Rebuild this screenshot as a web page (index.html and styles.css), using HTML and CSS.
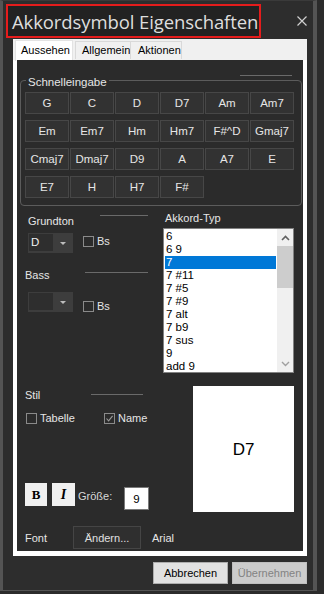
FILE: index.html
```html
<!DOCTYPE html>
<html>
<head>
<meta charset="utf-8">
<link rel="stylesheet" href="styles.css">
</head>
<body>
<div class="window">
  <div class="titlebar">
    <div class="title-box"><span class="title">Akkordsymbol Eigenschaften</span></div>
    <svg class="close" width="10" height="10" viewBox="0 0 10 10"><path d="M0.5 0.5 L9.5 9.5 M9.5 0.5 L0.5 9.5" stroke="#d0d0d0" stroke-width="1.2"/></svg>
  </div>
  <div class="tabctl">
    <div class="tabstrip">
      <div class="tab active">Aussehen</div>
      <div class="tab">Allgemein</div>
      <div class="tab">Aktionen</div>
    </div>
    <div class="panel">
      <div class="deco-line"></div>
      <div class="group">
        <div class="group-label">Schnelleingabe</div>
        <div class="chord-grid">
          <div class="cbtn">G</div><div class="cbtn">C</div><div class="cbtn">D</div><div class="cbtn">D7</div><div class="cbtn">Am</div><div class="cbtn">Am7</div>
          <div class="cbtn">Em</div><div class="cbtn">Em7</div><div class="cbtn">Hm</div><div class="cbtn">Hm7</div><div class="cbtn">F#^D</div><div class="cbtn">Gmaj7</div>
          <div class="cbtn">Cmaj7</div><div class="cbtn">Dmaj7</div><div class="cbtn">D9</div><div class="cbtn">A</div><div class="cbtn">A7</div><div class="cbtn">E</div>
          <div class="cbtn">E7</div><div class="cbtn">H</div><div class="cbtn">H7</div><div class="cbtn">F#</div>
        </div>
      </div>
      <div class="lower">
        <div class="left-col">
          <div class="hdr hdr-grund"><span class="lbl lbl-indent">Grundton</span><span class="hline w48"></span></div>
          <div class="combo-row">
            <div class="combo"><div class="combo-field">D</div><div class="combo-arrow"></div></div>
            <div class="chk-wrap chk-a"><span class="chk"></span><span class="lbl">Bs</span></div>
          </div>
          <div class="hdr hdr-bass"><span class="lbl">Bass</span><span class="hline w63 mt4"></span></div>
          <div class="combo-row row2">
            <div class="combo"><div class="combo-field"></div><div class="combo-arrow"></div></div>
            <div class="chk-wrap chk-b"><span class="chk"></span><span class="lbl">Bs</span></div>
          </div>
          <div class="hdr hdr-stil"><span class="lbl">Stil</span><span class="hline w52 mt6"></span></div>
          <div class="check-row">
            <div class="chk-wrap first"><span class="chk"></span><span class="lbl">Tabelle</span></div>
            <div class="chk-wrap"><span class="chk checked"><svg width="9" height="9" viewBox="0 0 9 9"><path d="M1.5 4.5 L3.6 6.8 L7.6 1.8" fill="none" stroke="#9a9a9a" stroke-width="1.1"/></svg></span><span class="lbl">Name</span></div>
          </div>
          <div class="style-row">
            <div class="sbtn bold">B</div>
            <div class="sbtn italic">I</div>
            <span class="lbl size-lbl">Größe:</span>
            <div class="size-input">9</div>
          </div>
        </div>
        <div class="right-col">
          <div class="lbl type-lbl">Akkord-Typ</div>
          <div class="listbox">
            <div class="items">
              <div class="item">6</div>
              <div class="item">6 9</div>
              <div class="item sel">7</div>
              <div class="item">7 #11</div>
              <div class="item">7 #5</div>
              <div class="item">7 #9</div>
              <div class="item">7 alt</div>
              <div class="item">7 b9</div>
              <div class="item">7 sus</div>
              <div class="item">9</div>
              <div class="item">add 9</div>
            </div>
            <div class="scrollbar">
              <div class="sarrow"><svg width="9" height="6" viewBox="0 0 9 6"><path d="M1 5 L4.5 1.5 L8 5" fill="none" stroke="#606060" stroke-width="1.6"/></svg></div>
              <div class="thumb"></div>
              <div class="strack"></div>
              <div class="sarrow"><svg width="9" height="6" viewBox="0 0 9 6"><path d="M1 1 L4.5 4.5 L8 1" fill="none" stroke="#a0a0a0" stroke-width="1.4"/></svg></div>
            </div>
          </div>
          <div class="preview">D7</div>
        </div>
      </div>
      <div class="font-row">
        <span class="lbl font-lbl">Font</span>
        <div class="dbtn">Ändern...</div>
        <span class="lbl arial">Arial</span>
      </div>
    </div>
  </div>
  <div class="footer">
    <div class="fbtn">Abbrechen</div>
    <div class="fbtn disabled">Übernehmen</div>
  </div>
</div>
</body>
</html>
```

FILE: styles.css
```css
* { box-sizing: border-box; }
html, body { margin: 0; padding: 0; }
body {
  width: 324px;
  height: 594px;
  background: #2b2b2b;
  font-family: "Liberation Sans", Arial, sans-serif;
  font-size: 11px;
  color: #e6e6e6;
  overflow: hidden;
}
.window {
  width: 317px;
  height: 591px;
  background: #2d2d2d;
  border-left: 3px solid #545454;
  border-right: 4px solid #545454;
  border-bottom: 1px solid #545454;
  border-top: 1px solid #3a3a3a;
}
.titlebar {
  height: 38px;
  display: flex;
  justify-content: space-between;
  align-items: flex-start;
}
.title-box {
  margin: 3px 0 0 3px;
  width: 255px;
  height: 34px;
  border: 2px solid #e51c1c;
  background: #222222;
  padding-left: 4px;
  display: flex;
  align-items: center;
}
.title {
  font-family: "Open Sans", "Noto Sans", sans-serif;
  font-size: 18.5px;
  color: #dedede;
  white-space: nowrap;
  letter-spacing: -0.1px;
}
.close { margin: 15px 6px 0 0; }
.tabctl {
  margin-left: 10px;
  width: 294px;
  height: 517px;
  background: #ffffff;
  padding: 0 4px 5px 4px;
  display: flex;
  flex-direction: column;
}
.tabstrip {
  height: 21px;
  display: flex;
  align-items: flex-start;
  background: #f0f0f0;
  margin: 0 -4px;
  padding-left: 2px;
  border-bottom: 0;
}
.tab {
  height: 18px;
  margin-top: 2px;
  padding: 0 6px;
  line-height: 16px;
  color: #000;
  background: #f0f0f0;
  border: 1px solid #d9d9d9;
  border-bottom: 0;
}
.tab.active {
  background: #ffffff;
  height: 21px;
  margin-top: 1px;
  width: 58px;
  padding-left: 5px;
  line-height: 18px;
  border-color: #e3e3e3;
}
.tab:nth-child(2) { width: 56px; margin-left: 2px; }
.tab:nth-child(3) { width: 52px; margin-left: -1px; padding-left: 7px; }
.panel {
  flex: 1;
  background: #2b2b2b;
}
.deco-line {
  margin: 15px 0 0 223px;
  width: 52px;
  height: 1px;
  background: #6a6a6a;
}
.group {
  margin: 4px 0 0 3px;
  width: 282px;
  height: 126px;
  border: 1px solid #5c5c5c;
  border-radius: 4px;
  padding-left: 4px;
}
.group-label {
  display: table;
  margin: -6px 0 0 1px;
  padding: 0 2px;
  line-height: 14px;
  background: #2b2b2b;
  font-size: 11.5px;
}
.chord-grid {
  margin-top: 3px;
  display: grid;
  grid-template-columns: repeat(6, 44px);
  grid-auto-rows: 22px;
  column-gap: 1px;
  row-gap: 6px;
}
.cbtn {
  background: #323232;
  border: 1px solid #474747;
  display: flex;
  align-items: center;
  justify-content: center;
  font-size: 11.5px;
  color: #e6e6e6;
}
.lower {
  display: flex;
  align-items: flex-start;
  margin: 5px 0 0 8px;
}
.left-col { width: 138px; margin-top: 3px; }
.right-col { width: 131px; }
.lbl { line-height: 14px; white-space: nowrap; color: #e6e6e6; }
.lbl-indent { padding-left: 3px; }
.hdr {
  display: flex;
  justify-content: space-between;
  align-items: flex-start;
  height: 14px;
  width: 123px;
}
.hdr-bass { margin-top: 15px; }
.hdr-stil { margin-top: 76px; width: 118px; }
.hline { height: 1px; background: #6a6a6a; margin-top: 1px; }
.w48 { width: 48px; }
.w63 { width: 63px; }
.w52 { width: 52px; }
.mt4 { margin-top: 4px; }
.mt6 { margin-top: 6px; }
.combo-row {
  display: flex;
  align-items: flex-start;
  margin-top: 5px;
  height: 20px;
}
.combo-row.row2 { margin-top: 10px; }
.combo {
  margin-left: 3px;
  width: 45px;
  height: 20px;
  background: #3d3d3d;
  padding: 1px;
  display: flex;
}
.combo-field {
  width: 24px;
  height: 17px;
  background: #2e2e2e;
  color: #f0f0f0;
  padding-left: 2px;
  line-height: 17px;
  font-size: 11.5px;
}
.combo-arrow {
  flex: 1;
  display: flex;
  align-items: center;
  justify-content: center;
}
.combo-arrow::after {
  content: "";
  border-left: 3px solid transparent;
  border-right: 3px solid transparent;
  border-top: 3px solid #bdbdbd;
}
.chk-wrap { display: flex; align-items: center; height: 14px; }
.chk-a { margin: 1px 0 0 10px; }
.chk-b { margin: 7px 0 0 10px; }
.chk {
  width: 11px;
  height: 11px;
  border: 1px solid #8a8a8a;
  margin-right: 3px;
  display: flex;
  align-items: center;
  justify-content: center;
}
.chk.checked { border-color: #8a8a8a; }
.check-row {
  display: flex;
  margin-top: 9px;
  padding-left: 1px;
}
.check-row .first { width: 78px; }
.style-row {
  display: flex;
  align-items: flex-start;
  margin-top: 58px;
  height: 27px;
}
.sbtn {
  width: 22px;
  height: 23px;
  background: #f0f0f0;
  color: #000;
  display: flex;
  align-items: center;
  justify-content: center;
  font-family: "Liberation Serif", serif;
  font-weight: bold;
  font-size: 13px;
}
.sbtn.italic {
  width: 23px;
  margin-left: 5px;
  font-style: italic;
  font-size: 14px;
}
.size-lbl {
  margin-left: 3px;
  width: 46px;
  line-height: 27px;
  color: #d8d8d8;
}
.size-input {
  margin-top: 4px;
  width: 25px;
  height: 23px;
  background: #fff;
  border: 1px solid #7a7a7a;
  color: #000;
  display: flex;
  align-items: center;
  justify-content: center;
  font-size: 11.5px;
}
.type-lbl { padding-left: 2px; }
.listbox {
  margin-top: 3px;
  width: 131px;
  height: 145px;
  border: 1px solid #828282;
  background: #fff;
  display: flex;
}
.items {
  flex: 1;
  padding-top: 1px;
}
.item {
  height: 13px;
  line-height: 13px;
  margin: 0 1px;
  padding-left: 1px;
  color: #000;
  font-size: 11.5px;
}
.item.sel { background: #0078d7; color: #fff; }
.scrollbar {
  width: 16px;
  background: #f0f0f0;
  display: flex;
  flex-direction: column;
}
.sarrow {
  height: 17px;
  display: flex;
  align-items: center;
  justify-content: center;
}
.thumb { height: 42px; background: #cdcdcd; }
.strack { flex: 1; }
.preview {
  margin: 13px 0 0 30px;
  width: 101px;
  height: 126px;
  background: #fff;
  color: #000;
  font-size: 17px;
  display: flex;
  align-items: center;
  justify-content: center;
  padding-top: 1px;
}
.font-row {
  display: flex;
  align-items: center;
  margin: 14px 0 0 8px;
  height: 23px;
}
.font-lbl { width: 48px; }
.dbtn {
  width: 68px;
  height: 23px;
  background: #2f2f2f;
  border: 1px solid #454545;
  color: #e0e0e0;
  display: flex;
  align-items: center;
  justify-content: center;
}
.arial { margin-left: 11px; }
.footer {
  display: flex;
  justify-content: flex-end;
  gap: 4px;
  padding: 6px 6px 0 0;
}
.fbtn {
  width: 75px;
  height: 22px;
  background: #e1e1e1;
  border: 1px solid #adadad;
  color: #000;
  display: flex;
  align-items: center;
  justify-content: center;
}
.fbtn.disabled {
  background: #cccccc;
  border-color: #bfbfbf;
  color: #838383;
}
```
